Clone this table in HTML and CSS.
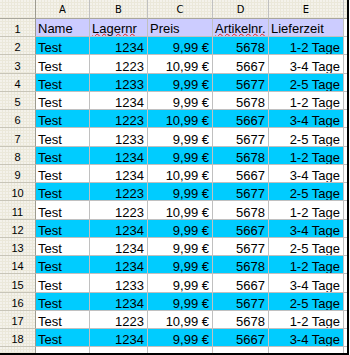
FILE: index.html
```
<!DOCTYPE html>
<html lang="de">
<head>
<meta charset="utf-8">
<title>Tabelle</title>
<link rel="stylesheet" href="styles.css">
</head>
<body>
<div class="sheet">
  <div class="grid">
    <div class="row head">
      <div class="corner"></div>
      <div class="ch">A</div><div class="ch">B</div><div class="ch">C</div><div class="ch">D</div><div class="ch">E</div>
      <div class="ch filler"></div>
    </div>
    <div class="row lav">
      <div class="rh">1</div><div class="c">Name</div><div class="c"><span class="spell">Lagernr</span></div><div class="c">Preis</div><div class="c"><span class="spell">Artikelnr.</span></div><div class="c">Lieferzeit</div><div class="c filler"></div>
    </div>
    <div class="row cyan"><div class="rh">2</div><div class="c">Test</div><div class="c n">1234</div><div class="c n">9,99 €</div><div class="c n">5678</div><div class="c n">1-2 Tage</div><div class="c filler"></div></div>
    <div class="row"><div class="rh">3</div><div class="c">Test</div><div class="c n">1223</div><div class="c n">10,99 €</div><div class="c n">5667</div><div class="c n">3-4 Tage</div><div class="c filler"></div></div>
    <div class="row cyan"><div class="rh">4</div><div class="c">Test</div><div class="c n">1233</div><div class="c n">9,99 €</div><div class="c n">5677</div><div class="c n">2-5 Tage</div><div class="c filler"></div></div>
    <div class="row"><div class="rh">5</div><div class="c">Test</div><div class="c n">1234</div><div class="c n">9,99 €</div><div class="c n">5678</div><div class="c n">1-2 Tage</div><div class="c filler"></div></div>
    <div class="row cyan"><div class="rh">6</div><div class="c">Test</div><div class="c n">1223</div><div class="c n">10,99 €</div><div class="c n">5667</div><div class="c n">3-4 Tage</div><div class="c filler"></div></div>
    <div class="row"><div class="rh">7</div><div class="c">Test</div><div class="c n">1233</div><div class="c n">9,99 €</div><div class="c n">5677</div><div class="c n">2-5 Tage</div><div class="c filler"></div></div>
    <div class="row cyan"><div class="rh">8</div><div class="c">Test</div><div class="c n">1234</div><div class="c n">9,99 €</div><div class="c n">5678</div><div class="c n">1-2 Tage</div><div class="c filler"></div></div>
    <div class="row"><div class="rh">9</div><div class="c">Test</div><div class="c n">1234</div><div class="c n">10,99 €</div><div class="c n">5667</div><div class="c n">3-4 Tage</div><div class="c filler"></div></div>
    <div class="row cyan"><div class="rh">10</div><div class="c">Test</div><div class="c n">1223</div><div class="c n">9,99 €</div><div class="c n">5677</div><div class="c n">2-5 Tage</div><div class="c filler"></div></div>
    <div class="row"><div class="rh">11</div><div class="c">Test</div><div class="c n">1223</div><div class="c n">10,99 €</div><div class="c n">5678</div><div class="c n">1-2 Tage</div><div class="c filler"></div></div>
    <div class="row cyan"><div class="rh">12</div><div class="c">Test</div><div class="c n">1234</div><div class="c n">9,99 €</div><div class="c n">5667</div><div class="c n">3-4 Tage</div><div class="c filler"></div></div>
    <div class="row"><div class="rh">13</div><div class="c">Test</div><div class="c n">1234</div><div class="c n">9,99 €</div><div class="c n">5677</div><div class="c n">2-5 Tage</div><div class="c filler"></div></div>
    <div class="row cyan"><div class="rh">14</div><div class="c">Test</div><div class="c n">1234</div><div class="c n">9,99 €</div><div class="c n">5678</div><div class="c n">1-2 Tage</div><div class="c filler"></div></div>
    <div class="row"><div class="rh">15</div><div class="c">Test</div><div class="c n">1233</div><div class="c n">9,99 €</div><div class="c n">5667</div><div class="c n">3-4 Tage</div><div class="c filler"></div></div>
    <div class="row cyan"><div class="rh">16</div><div class="c">Test</div><div class="c n">1234</div><div class="c n">9,99 €</div><div class="c n">5677</div><div class="c n">2-5 Tage</div><div class="c filler"></div></div>
    <div class="row"><div class="rh">17</div><div class="c">Test</div><div class="c n">1223</div><div class="c n">10,99 €</div><div class="c n">5678</div><div class="c n">1-2 Tage</div><div class="c filler"></div></div>
    <div class="row cyan"><div class="rh">18</div><div class="c">Test</div><div class="c n">1234</div><div class="c n">9,99 €</div><div class="c n">5667</div><div class="c n">3-4 Tage</div><div class="c filler"></div></div>
    <div class="row"><div class="rh">19</div><div class="c"></div><div class="c"></div><div class="c"></div><div class="c"></div><div class="c"></div><div class="c filler"></div></div>
  </div>
</div>
</body>
</html>
```
FILE: styles.css
```
html, body {
  margin: 0;
  padding: 0;
  background: #ffffff;
}

.sheet {
  width: 347px;
  height: 353px;
  overflow: hidden;
  border-right: 2px solid #000000;
  border-bottom: 2px solid #000000;
  background: #ffffff;
  font-family: "Liberation Sans", Arial, sans-serif;
  color: #000000;
}

.grid {
  display: grid;
  grid-template-columns: 36px 54px 58px 65px 56px 75px 3px;
  grid-template-rows: 19px 18px repeat(17, 18.25px) 18px;
}

.row {
  display: contents;
}

.corner,
.ch,
.rh,
.c {
  box-sizing: border-box;
  border-right: 1px solid #c0c0c0;
  border-bottom: 1px solid #c0c0c0;
  display: flex;
  align-items: flex-end;
  white-space: nowrap;
  overflow: hidden;
}

.corner,
.ch,
.rh {
  background-color: #ebe8da;
  background-image: radial-gradient(circle at 1px 1px, rgba(255, 255, 255, 0.7) 0.6px, transparent 0.9px);
  background-size: 3px 3px;
}

.corner,
.rh {
  border-right-color: #9d9b90;
}

.ch {
  justify-content: center;
  font-family: "DejaVu Sans", Tahoma, sans-serif;
  font-size: 10px;
  line-height: 10px;
  padding-bottom: 3px;
  border-bottom-color: #a8a69c;
}

.corner {
  border-bottom-color: #a8a69c;
}

.ch.filler {
  border-right: none;
}

.rh {
  justify-content: center;
  font-size: 11px;
  line-height: 10px;
  padding-bottom: 2px;
  border-bottom-color: #c8c5b8;
}

.c {
  font-size: 13px;
  line-height: 13px;
  padding: 0 2px 0 2px;
  background: #ffffff;
}

.c.n {
  justify-content: flex-end;
  padding-right: 3px;
}

.c.filler {
  border-right: none;
  padding: 0;
}

.lav .c {
  background: #ccccff;
  padding-bottom: 1px;
}

.cyan .c {
  background: #00ccff;
}

.lav .c.filler,
.cyan .c.filler {
  background: #ffffff;
}

.spell {
  text-decoration-line: underline;
  text-decoration-style: wavy;
  text-decoration-color: #e0201c;
  text-decoration-thickness: 1px;
  text-underline-offset: 0px;
}
```
